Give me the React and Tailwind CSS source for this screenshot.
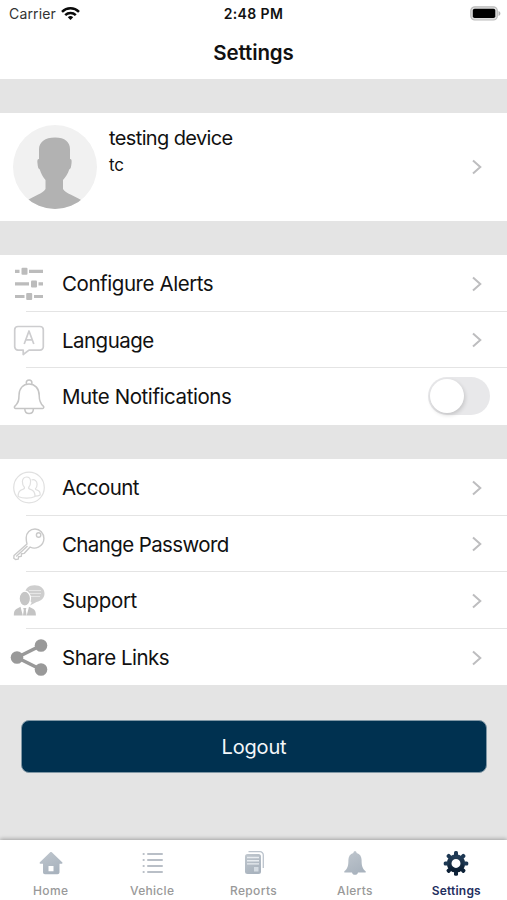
const Chevron = () => (
  <svg className="mr-[24px] block h-[16px] w-[12px] shrink-0" viewBox="0 0 12 16" fill="none" stroke="#bdbdbf" strokeWidth="2">
    <path d="M2 1.500 9.300 8 2 14.500" />
  </svg>
);

const SlidersIcon = () => (
  <svg className="block h-[38px] w-[38px]" viewBox="0 0 38 38" fill="#bcbcbc">
    <path d="M5 4.700h4.500v3.200H5zM19 4.700h14v3.200H19zM5 17.300h14v3.200H5zM28.500 17.300H33v3.200h-4.500zM5 29.900h9.500v3.200H5zM24 29.900h9v3.200h-9z" />
    <rect x="11.500" y="2.800" width="6" height="7" rx="1" />
    <rect x="21" y="15.400" width="6" height="7" rx="1" />
    <rect x="16.200" y="28" width="6" height="7" rx="1" />
  </svg>
);

const LanguageIcon = () => (
  <svg className="block h-[38px] w-[38px]" viewBox="0 0 38 38" fill="none" stroke="#cdcdcf" strokeWidth="1.700" strokeLinejoin="round">
    <path d="M8 5.500h22a3.300 3.300 0 0 1 3.300 3.300v17a3.300 3.300 0 0 1-3.300 3.300H19l-5.800 4.400v-4.400H8a3.300 3.300 0 0 1-3.300-3.300v-17A3.300 3.300 0 0 1 8 5.500z" />
    <path d="m14.200 23 4.800-13 4.800 13M15.800 18.800h6.400" />
  </svg>
);

const BellOutlineIcon = () => (
  <svg className="block h-[38px] w-[38px]" viewBox="0 0 38 38" fill="none" stroke="#c5c5c5" strokeWidth="1.500" strokeLinejoin="round">
    <path d="M16.300 6.200V4.800a2.800 2.800 0 0 1 5.600 0v1.400M5.500 30.500c-1.200 0-1.500-1.500-.6-2.400C8.500 25.100 9 22.500 9 17.500 9 10.500 13 6 19 6s10.200 4.500 10.200 11.500c0 5 .6 7.600 4.100 10.600.9.900.5 2.400-.7 2.400z" />
    <path d="M14.800 30.700c0 2.800 1.600 4.800 4.300 4.800s4.300-2 4.300-4.800" />
  </svg>
);

const AccountIcon = () => (
  <svg className="block h-[38px] w-[38px]" viewBox="0 0 38 38" fill="none" stroke="#e0e0e0" strokeWidth="1.200" strokeLinejoin="round">
    <circle cx="19" cy="18.500" r="15.300" />
    <path d="M16.500 8c2.600 0 4.100 2 4.100 4.600 0 2.700-.8 4.700-1.900 5.700-.3 1.300 0 1.600 1.700 2 3.200.7 4.600 2.500 4.600 7.200-2.300 1.200-5 1.600-8.400 1.600s-6.200-.6-8.500-1.600c0-4.700 1.500-6.500 4.600-7.200 1.600-.4 2-.7 1.700-2-1.200-1-2-3-2-5.700 0-2.600 1.500-4.600 4.100-4.600z" />
    <path d="M21.500 11c3-1 5.600.7 5.600 4.200 0 2-.6 3.600-1.700 4.500 0 1 .5 1.200 1.800 1.500 2 .5 3 1.800 3 4.800-1.300.8-3 1.200-5.200 1.200" />
  </svg>
);

const KeyIcon = () => (
  <svg className="block h-[38px] w-[38px]" viewBox="0 0 38 38" fill="none" stroke="#cacaca" strokeWidth="1.400" strokeLinejoin="round">
    <path d="M17 19 4 30.500l-.2 2.800 1.700 1.200 2.700-.4.400-2.300 2.600-.4.400-2.600 2.500-.4 6-6.400c2.500 1.300 5.800 1.300 8.300.1 3.500-1.600 5.500-4.800 5.500-8.500 0-5.400-4-9.600-8.900-9.600-4.900 0-8.800 3.800-8.800 8.800 0 2.200.3 4.400.8 6.200z" />
    <circle cx="28.600" cy="10" r="2.200" />
    <path d="M17.500 21 6.200 31.500" />
  </svg>
);

const SupportIcon = () => (
  <svg className="block h-[38px] w-[38px]" viewBox="0 0 38 38">
    <path d="M24.500 3.300c6 0 10 3.200 10 8.200 0 4.400-3 7.500-8 8.500l-6.500 3.500c1-1.200 1.500-2.200 1.500-3.400-4-1.100-6.500-4-6.500-8.100 0-5.500 3.900-8.700 9.500-8.700z" fill="#cecece" />
    <path d="M19 8.500h12M19 11.500h12M20 14.500h10" stroke="#e6e6e6" strokeWidth="1" />
    <ellipse cx="14.800" cy="16.600" rx="5.700" ry="7.400" fill="#c6c6c6" stroke="#fff" strokeWidth="1.200" />
    <path d="M10.500 24.800 12.800 33.500H3.800c0-3.500.8-5.500 2.500-6.400zM19 24.800l4.400 2.300c1.700.9 2.500 2.900 2.500 6.400h-9.200zM13.200 26h3.200l-.6 2 .8 5.500h-3.600l.8-5.500z" fill="#c4c4c4" />
  </svg>
);

const ShareIcon = () => (
  <svg className="block h-[38px] w-[38px]" viewBox="0 0 38 38" fill="#999999">
    <path d="M31 6.500 7 18.500l24 12" fill="none" stroke="#999999" strokeWidth="3.500" />
    <circle cx="7" cy="18.500" r="6.300" />
    <circle cx="31" cy="6.500" r="6.300" />
    <circle cx="31" cy="30.500" r="6.300" />
  </svg>
);

const Toggle = () => (
  <div className="mr-[17px] mb-[1px] flex h-[38px] w-[62px] items-center rounded-full bg-[#e8e8ea]">
    <div className="ml-[2px] h-[34px] w-[34px] rounded-full bg-white shadow-[1px_2px_4px_rgba(0,0,0,0.16)]" />
  </div>
);

const Row = ({ icon, label, tracking = "tracking-[-0.430px]", divider = true, children }) => (
  <div className="relative flex h-[56.600px] items-center pt-[1px]">
    <div className="ml-[10px] w-[38px] shrink-0">{icon}</div>
    <div className="ml-[14px] flex-1 pt-[1px] text-[20.500px] leading-[24px]">
      <span className={tracking}>{label}</span>
    </div>
    {children || <Chevron />}
    {divider && <div className="absolute right-0 bottom-0 left-[26px] h-px bg-[#e4e4e4]" />}
  </div>
);

const HomeIcon = () => (
  <svg className="block h-[26px] w-[26px]" viewBox="0 0 26 26" fill="url(#tabFill)">
    <path fillRule="evenodd" d="M12.200 2.300c.5-.4 1.100-.4 1.600 0l10.400 10c.6.600.3 1.400-.5 1.400H21.500v8.500c0 1.200-.8 2-2 2H7c-1.200 0-2-.8-2-2v-8.500H2.400c-.8 0-1.100-.8-.5-1.400zM10.500 16v5.200h5V16z" />
  </svg>
);

const ListIcon = () => (
  <svg className="block h-[26px] w-[26px]" viewBox="0 0 26 26" fill="none" stroke="#b9bfc7" strokeWidth="2" strokeLinecap="round">
    <path d="M4.500 4h.3M9 4h14M4.500 10h.3M9 10h14M4.500 16h.3M9 16h14M4.500 22h.3M9 22h14" />
  </svg>
);

const ReportsIcon = () => (
  <svg className="block h-[26px] w-[26px]" viewBox="0 0 26 26">
    <path d="M7.500 1.700h11.500a3.300 3.300 0 0 1 3.300 3.300v13" fill="none" stroke="#bcc4cd" strokeWidth="1.300" />
    <path fill="url(#tabFill)" d="M6.500 4h11A2.500 2.500 0 0 1 20 6.500v15a2.500 2.500 0 0 1-2.500 2.500h-11A2.500 2.500 0 0 1 4 21.500v-15A2.500 2.500 0 0 1 6.500 4z" />
    <path d="M6 7.500h12M6 10.700h12M6 13.900h12" stroke="#e8ecf0" strokeWidth="1.400" />
    <path d="M13 17h4.500v4.500H13z" fill="#d4dbe2" />
  </svg>
);

const BellIcon = () => (
  <svg className="block h-[26px] w-[26px]" viewBox="0 0 26 26" fill="url(#tabFill)">
    <path d="M13 1.300c1 0 1.600.7 1.600 1.600 3.400.8 5 3.600 5 7.100 0 6 .8 8.500 4 11.200.4.800.2 1.300-.6 1.300H3c-.8 0-1-.5-.6-1.300 3.200-2.700 4-5.200 4-11.200 0-3.500 1.600-6.300 5-7.100 0-.9.6-1.600 1.600-1.600zM10 22.500h6c-.3 1.500-1.400 2.300-3 2.300s-2.700-.8-3-2.300z" />
  </svg>
);

const TEETH = [0, 45, 90, 135, 180, 225, 270, 315];
const GearIcon = () => (
  <svg className="block h-[26px] w-[26px]" viewBox="0 0 26 26" fill="url(#gearFill)">
    <path fillRule="evenodd" d="M13 4.200a9.200 9.200 0 1 0 0 18.400 9.200 9.200 0 0 0 0-18.400zm0 4.700a4.500 4.500 0 1 1 0 9 4.500 4.500 0 0 1 0-9z" />
    {TEETH.map((a) => (
      <rect key={a} x="11" y="1.100" width="4" height="5" rx="1.500" fill={a > 90 && a < 270 ? "#0d2137" : "#1d3853"} transform={`rotate(${a} 13 13.400)`} />
    ))}
  </svg>
);

const Tab = ({ icon, label, tone }) => (
  <div className={`flex flex-1 flex-col items-center pt-[10px] text-[12px] leading-[16px] ${tone}`}>
    {icon}
    <span className="mt-[7px]">{label}</span>
  </div>
);

export default function App() {
  return (
    <div className="flex h-[900px] w-[507px] flex-col overflow-hidden bg-[#e4e4e4] font-['Inter','Liberation_Sans',sans-serif] text-[#111]">
      <svg className="absolute h-0 w-0">
        <defs>
          <linearGradient id="tabFill" x1="0" y1="0" x2="0.500" y2="1">
            <stop offset="0" stopColor="#c0c7ce" />
            <stop offset="1" stopColor="#a9b3be" />
          </linearGradient>
          <linearGradient id="gearFill" x1="0" y1="0" x2="0" y2="1">
            <stop offset="0" stopColor="#27435e" />
            <stop offset="1" stopColor="#08192c" />
          </linearGradient>
        </defs>
      </svg>

      <header className="h-[79px] shrink-0 bg-white">
        <div className="grid h-[27px] grid-cols-3 items-center text-[14px] leading-[18px]">
          <div className="flex items-center pl-[9px]">
            <span className="tracking-[0.150px] text-[#333]">Carrier</span>
            <svg className="ml-[5px] block h-[14px] w-[19px]" viewBox="0 0 19 14" fill="none" stroke="#0a0a0a" strokeWidth="2.500">
              <path d="M1 4.800a12.200 12.200 0 0 1 17 0M4.200 8.200a7.700 7.700 0 0 1 10.600 0" />
              <path d="m9.500 13.100-2.700-2.900a4 4 0 0 1 5.400 0z" fill="#0a0a0a" stroke="none" />
            </svg>
          </div>
          <span className="text-center font-semibold tracking-[0.400px]">2:48 PM</span>
          <svg className="mr-[6px] block h-[15px] w-[31px] justify-self-end" viewBox="0 0 31 15">
            <rect x="0.800" y="0.800" width="26.500" height="13.200" rx="4" fill="#dedede" stroke="#bbbbbb" strokeWidth="1.200" />
            <rect x="2.800" y="2.800" width="22.500" height="9.200" rx="1.800" fill="#000" />
            <path d="M28.500 5v5c1.200-.4 1.900-1.400 1.900-2.500S29.700 5.400 28.500 5z" fill="#b0b0b0" />
          </svg>
        </div>
        <h1 className="pt-[14px] text-center text-[20.500px] leading-[24px] font-semibold tracking-[-0.100px]">Settings</h1>
      </header>

      <section className="mt-[34px] flex h-[108px] shrink-0 items-center bg-white">
        <svg className="ml-[13px] block h-[84px] w-[84px] shrink-0" viewBox="0 0 84 84">
          <clipPath id="avatarClip">
            <circle cx="42" cy="42" r="42" />
          </clipPath>
          <g clipPath="url(#avatarClip)">
            <rect width="84" height="84" fill="#f1f1f1" />
            <path fill="#b2b2b2" d="M42 12.500c10 0 15 4.500 15 12v9.500c1.800 0 1.800 1.800 1.500 4.500-.4 3.500-.8 5.500-2.300 6-1.200 4.500-3.700 7.500-6.200 10.500v9c2 4.500 13 7 19.500 12V84H13.500V76c6.500-5 17-7.500 19-12v-9c-2.500-3-4.500-6-5.700-10.500-1.500-.5-2-2.500-2.300-6-.3-2.700-.3-4.500 1.500-4.500v-9.500c0-7.500 6-12 16-12z" />
          </g>
        </svg>
        <div className="ml-[12px] flex-1 self-start pt-[12px]">
          <div className="text-[20px] leading-[26px] tracking-[-0.620px]">testing device</div>
          <div className="mt-[2px] text-[17px] leading-[24px] tracking-[-0.200px]">tc</div>
        </div>
        <Chevron />
      </section>

      <section className="mt-[34px] h-[170px] shrink-0 bg-white">
        <Row icon={<SlidersIcon />} label="Configure Alerts" />
        <Row icon={<LanguageIcon />} label="Language" tracking="tracking-[-0.530px]" />
        <Row icon={<BellOutlineIcon />} label="Mute Notifications" divider={false}>
          <Toggle />
        </Row>
      </section>

      <section className="mt-[34px] h-[226.400px] shrink-0 bg-white">
        <Row icon={<AccountIcon />} label="Account" tracking="tracking-[-0.550px]" />
        <Row icon={<KeyIcon />} label="Change Password" tracking="tracking-[-0.620px]" />
        <Row icon={<SupportIcon />} label="Support" tracking="tracking-[-0.350px]" />
        <Row icon={<ShareIcon />} label="Share Links" tracking="tracking-[-0.500px]" divider={false} />
      </section>

      <button className="mt-[35px] mr-[20px] ml-[21px] block h-[52.500px] shrink-0 rounded-[8px] border border-[#8097a5] bg-[#003150] pt-px text-[20px] leading-[24px] tracking-[-0.150px] text-[#f3f7fa]">
        Logout
      </button>

      <nav className="mt-auto flex h-[60px] shrink-0 bg-white shadow-[0_-1px_4px_rgba(0,0,0,0.300)]">
        <Tab icon={<HomeIcon />} label="Home" tone="font-medium text-[#999] tracking-[0.350px]" />
        <Tab icon={<ListIcon />} label="Vehicle" tone="font-medium text-[#999] tracking-[0.300px]" />
        <Tab icon={<ReportsIcon />} label="Reports" tone="font-medium text-[#999] tracking-[0.350px]" />
        <Tab icon={<BellIcon />} label="Alerts" tone="font-medium text-[#999] tracking-[0.300px]" />
        <Tab icon={<GearIcon />} label="Settings" tone="font-semibold text-[#1f2f60] tracking-[0.200px]" />
      </nav>
    </div>
  );
}
